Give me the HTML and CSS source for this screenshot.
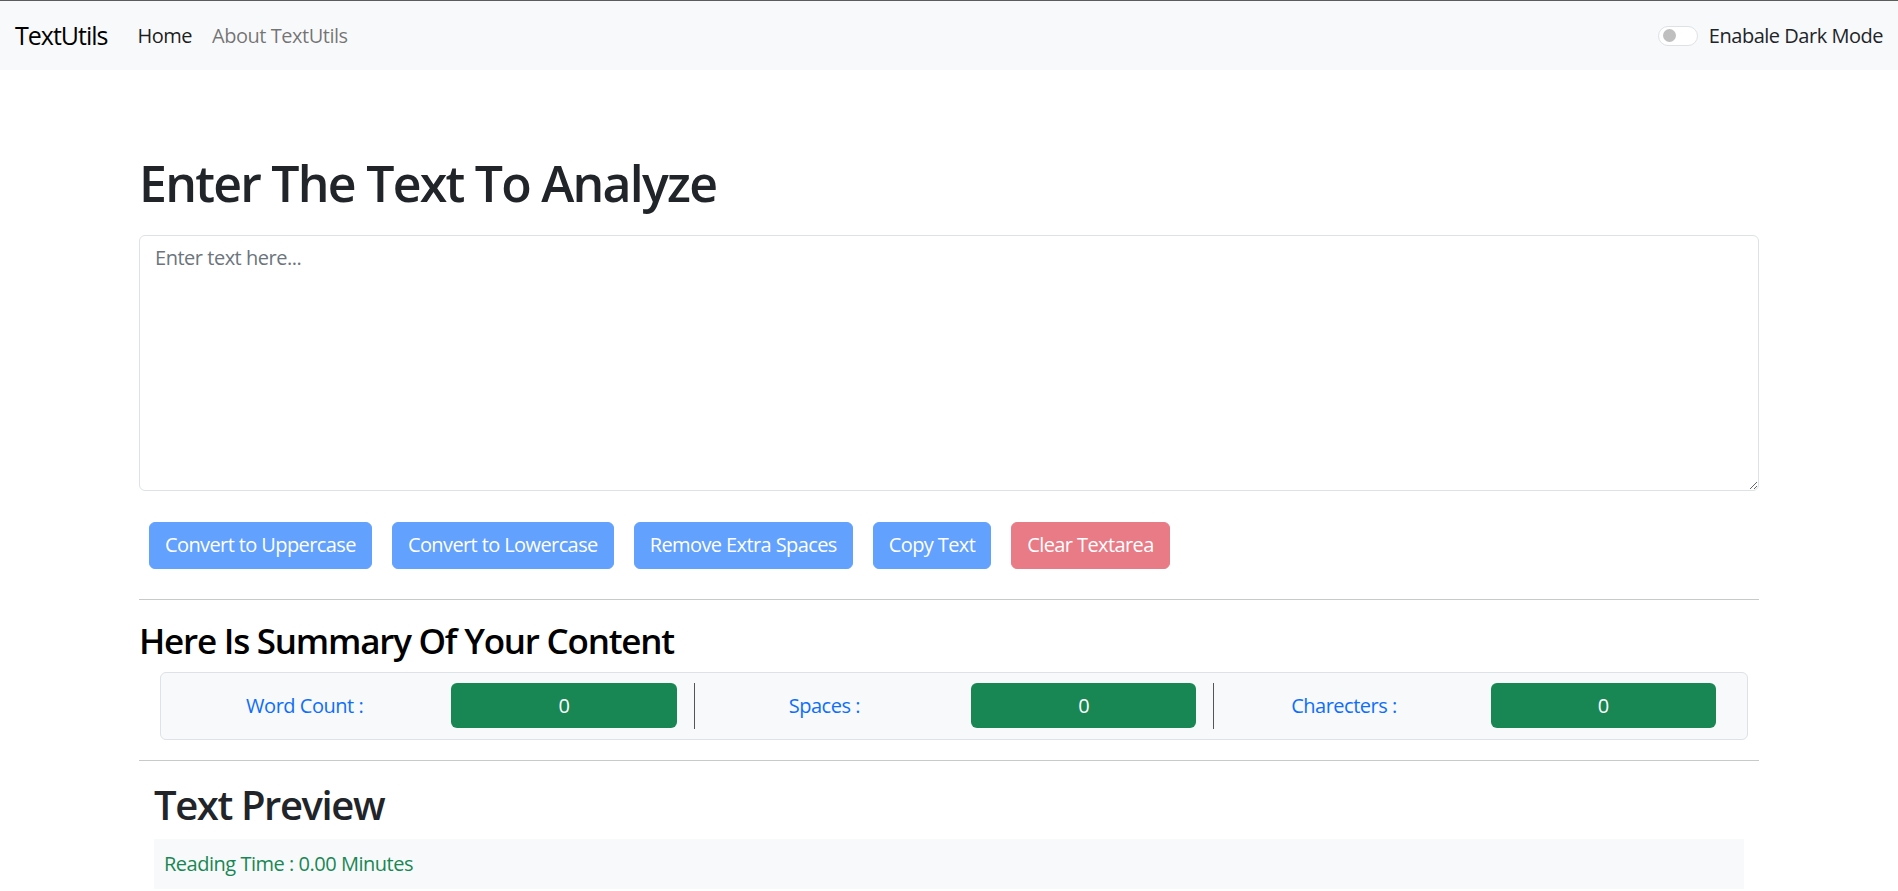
FILE: index.html
```html
<!DOCTYPE html>
<html lang="en">
<head>
  <meta charset="UTF-8" />
  <meta name="viewport" content="width=device-width, initial-scale=1.0" />
  <title>TextUtils</title>
  <link rel="stylesheet" href="styles.css">
</head>
<body>
  <nav class="navbar">
    <a class="brand" href="#">TextUtils</a>
    <ul class="nav">
      <li><a class="nav-link active" href="#">Home</a></li>
      <li><a class="nav-link" href="#">About TextUtils</a></li>
    </ul>
    <label class="switch">
      <span class="switch-track"><span class="switch-knob"></span></span>
      <span class="switch-label">Enabale Dark Mode</span>
    </label>
  </nav>

  <div class="alert-space"></div>

  <div class="container">
    <h1>Enter The Text To Analyze</h1>
    <textarea class="text-input" id="text" placeholder="Enter text here..."></textarea>

    <div class="actions">
      <button class="btn" disabled>Convert to Uppercase</button>
      <button class="btn" disabled>Convert to Lowercase</button>
      <button class="btn" disabled>Remove Extra Spaces</button>
      <button class="btn" disabled>Copy Text</button>
      <button class="btn btn-danger" disabled>Clear Textarea</button>
    </div>

    <hr>

    <h3>Here Is Summary Of Your Content</h3>
    <div class="summary">
      <div class="stat">
        <div class="stat-label">Word Count :</div>
        <div class="stat-value"><span id="words">0</span></div>
      </div>
      <div class="stat">
        <div class="stat-label">Spaces :</div>
        <div class="stat-value"><span id="spaces">0</span></div>
      </div>
      <div class="stat">
        <div class="stat-label">Charecters :</div>
        <div class="stat-value"><span id="chars">0</span></div>
      </div>
    </div>

    <hr>

    <div class="preview">
      <h2>Text Preview</h2>
      <div class="preview-box">
        <p class="reading">Reading Time : <span id="time">0.00</span> Minutes</p>
      </div>
    </div>
  </div>

  <script>
    const text = document.getElementById('text');
    text.addEventListener('input', () => {
      const value = text.value;
      const words = value.split(/\s+/).filter(w => w.length).length;
      document.getElementById('words').textContent = words;
      document.getElementById('spaces').textContent = (value.match(/ /g) || []).length;
      document.getElementById('chars').textContent = value.length;
      document.getElementById('time').textContent = (words * 0.008).toFixed(2);
    });
  </script>
</body>
</html>
```

FILE: styles.css
```css
body {
  margin: 0;
  font-family: 'Open Sans', 'Noto Sans', sans-serif;
  font-size: 20px;
  line-height: 30px;
  letter-spacing: -0.024em;
  color: #212529;
  background: #ffffff;
  overflow: hidden;
}

.navbar {
  display: flex;
  align-items: center;
  height: 70px;
  box-sizing: border-box;
  padding: 10px 15px;
  background: #f8f9fa;
  border-top: 1px solid #5c5c5c;
}

.brand {
  font-size: 25px;
  line-height: 37px;
  letter-spacing: -0.04em;
  color: #000;
  text-decoration: none;
  margin-right: 20px;
}

.nav {
  display: flex;
  list-style: none;
  margin: 0;
  padding: 0;
}

.nav-link {
  display: block;
  padding: 10px;
  color: rgba(0, 0, 0, 0.55);
  text-decoration: none;
}

.nav-link.active {
  color: rgba(0, 0, 0, 0.9);
}

.switch {
  margin-left: auto;
  display: flex;
  align-items: center;
  gap: 11px;
}

.switch-track {
  display: flex;
  align-items: center;
  width: 40px;
  height: 20px;
  box-sizing: border-box;
  border: 1px solid #dee2e6;
  border-radius: 10px;
  background: #fff;
  padding-left: 4px;
}

.switch-knob {
  width: 13px;
  height: 13px;
  border-radius: 50%;
  background: #bfbfbf;
}

.alert-space {
  height: 62.5px;
}

.container {
  width: 1650px;
  box-sizing: border-box;
  margin: 20px auto 0;
  padding: 0 15px;
}

h1, h2, h3 {
  font-weight: 600;
  letter-spacing: -0.035em;
  margin: 0 0 10px;
}

h1 {
  font-size: 50px;
  line-height: 60px;
  margin-bottom: 22px;
}

h2 {
  font-size: 40px;
  line-height: 48px;
}

h3 {
  font-size: 35px;
  line-height: 42px;
  color: #000;
}

.text-input {
  display: block;
  width: 100%;
  height: 256px;
  box-sizing: border-box;
  padding: 7px 15px;
  font: inherit;
  letter-spacing: inherit;
  color: #212529;
  border: 1px solid #dee2e6;
  border-radius: 6px;
}

.text-input::placeholder {
  color: #6c757d;
}

.actions {
  display: flex;
  gap: 20px;
  margin: 31px 10px 0;
  padding-bottom: 10px;
}

.btn {
  font: inherit;
  letter-spacing: -0.03em;
  padding: 7.5px 15px;
  color: #fff;
  background: #62a1fe;
  border: 1px solid #62a1fe;
  border-radius: 6px;
}

.btn-danger {
  background: #e87b86;
  border-color: #e87b86;
}

hr {
  margin: 20px 0;
  border: 0;
  border-top: 1px solid #c8c9ca;
}

.summary {
  display: flex;
  margin: 0 11px 0 21px;
  padding: 10px 14px;
  background: #f8f9fa;
  border: 1px solid #dee2e6;
  border-radius: 6px;
}

.stat {
  flex: 1;
  display: flex;
  align-items: center;
  height: 46px;
}

.stat + .stat {
  border-left: 1px solid #555;
}

.stat-label {
  width: 50%;
  text-align: center;
  color: #0d6efd;
}

.stat-value {
  width: 50%;
  box-sizing: border-box;
  padding: 0 17px;
}

.stat-value span {
  display: block;
  height: 45px;
  line-height: 45px;
  text-align: center;
  color: #fff;
  background: #198754;
  border-radius: 6px;
}

.preview {
  padding: 0 15px;
}

.preview-box {
  background: #f8f9fa;
  padding: 10px;
}

.reading {
  margin: 0;
  color: #198754;
}
```
